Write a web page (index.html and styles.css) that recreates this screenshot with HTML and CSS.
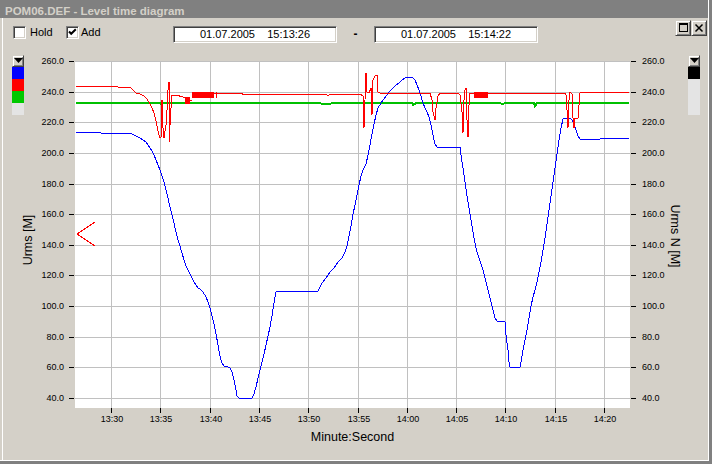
FILE: index.html
```html
<!DOCTYPE html>
<html>
<head>
<meta charset="utf-8">
<title>POM06.DEF - Level time diagram</title>
<link rel="stylesheet" href="styles.css">
</head>
<body>
<div class="window">
  <div class="frame">
    <div class="titlebar">POM06.DEF - Level time diagram</div>
    <div class="content">
      <div class="toolbar">
        <div class="check hold"><span class="box"></span><span class="lbl">Hold</span></div>
        <div class="check add"><span class="box"><svg width="11" height="11" viewBox="0 0 11 11"><polyline points="2,4.5 4.2,6.8 8.8,2.2" fill="none" stroke="#000" stroke-width="2"/></svg></span><span class="lbl">Add</span></div>
        <div class="datebox">01.07.2005    15:13:26</div>
        <div class="dash">-</div>
        <div class="datebox">01.07.2005    15:14:22</div>
        <div class="winbtns">
          <span class="wbtn"><svg width="14" height="14" viewBox="1 1 14 14"><rect x="4.5" y="3.5" width="8" height="8" fill="none" stroke="#000"/><line x1="4" y1="4.5" x2="13" y2="4.5" stroke="#000"/></svg></span>
          <span class="wbtn"><svg width="14" height="14" viewBox="1 1 14 14"><path d="M4.5 4.5 L11.5 11.5 M11.5 4.5 L4.5 11.5" stroke="#000" stroke-width="1.5"/></svg></span>
        </div>
      </div>
      <div class="main">
        <svg class="chart" width="705" height="412" viewBox="3 48 705 412">
          <rect x="75" y="61" width="555" height="347" fill="#fff"/>
          <g class="grid" stroke="#c0c0c0" stroke-width="1" shape-rendering="crispEdges">
            <line x1="75" y1="61.5" x2="630" y2="61.5"/>
            <line x1="75" y1="92.5" x2="630" y2="92.5"/>
            <line x1="75" y1="122.5" x2="630" y2="122.5"/>
            <line x1="75" y1="153.5" x2="630" y2="153.5"/>
            <line x1="75" y1="184.5" x2="630" y2="184.5"/>
            <line x1="75" y1="214.5" x2="630" y2="214.5"/>
            <line x1="75" y1="245.5" x2="630" y2="245.5"/>
            <line x1="75" y1="275.5" x2="630" y2="275.5"/>
            <line x1="75" y1="306.5" x2="630" y2="306.5"/>
            <line x1="75" y1="337.5" x2="630" y2="337.5"/>
            <line x1="75" y1="367.5" x2="630" y2="367.5"/>
            <line x1="75" y1="398.5" x2="630" y2="398.5"/>
            <line x1="111.5" y1="61" x2="111.5" y2="408"/>
            <line x1="160.5" y1="61" x2="160.5" y2="408"/>
            <line x1="210.5" y1="61" x2="210.5" y2="408"/>
            <line x1="259.5" y1="61" x2="259.5" y2="408"/>
            <line x1="308.5" y1="61" x2="308.5" y2="408"/>
            <line x1="358.5" y1="61" x2="358.5" y2="408"/>
            <line x1="407.5" y1="61" x2="407.5" y2="408"/>
            <line x1="456.5" y1="61" x2="456.5" y2="408"/>
            <line x1="505.5" y1="61" x2="505.5" y2="408"/>
            <line x1="555.5" y1="61" x2="555.5" y2="408"/>
            <line x1="604.5" y1="61" x2="604.5" y2="408"/>
          </g>
          <g class="ticks" stroke="#000" stroke-width="1" shape-rendering="crispEdges">
            <path d="M69 61.5H74M69 92.5H74M69 122.5H74M69 153.5H74M69 184.5H74M69 214.5H74M69 245.5H74M69 275.5H74M69 306.5H74M69 337.5H74M69 367.5H74M69 398.5H74"/>
            <path d="M631 61.5H636M631 92.5H636M631 122.5H636M631 153.5H636M631 184.5H636M631 214.5H636M631 245.5H636M631 275.5H636M631 306.5H636M631 337.5H636M631 367.5H636M631 398.5H636"/>
            <path d="M111.5 408V413M160.5 408V413M210.5 408V413M259.5 408V413M308.5 408V413M358.5 408V413M407.5 408V413M456.5 408V413M505.5 408V413M555.5 408V413M604.5 408V413"/>
          </g>
          <g class="ylabels" text-anchor="end">
            <text x="64" y="64">260.0</text>
            <text x="64" y="95">240.0</text>
            <text x="64" y="125">220.0</text>
            <text x="64" y="156">200.0</text>
            <text x="64" y="187">180.0</text>
            <text x="64" y="217">160.0</text>
            <text x="64" y="248">140.0</text>
            <text x="64" y="278">120.0</text>
            <text x="64" y="309">100.0</text>
            <text x="64" y="340">80.0</text>
            <text x="64" y="370">60.0</text>
            <text x="64" y="401">40.0</text>
          </g>
          <g class="ylabels" text-anchor="start">
            <text x="642" y="64">260.0</text>
            <text x="642" y="95">240.0</text>
            <text x="642" y="125">220.0</text>
            <text x="642" y="156">200.0</text>
            <text x="642" y="187">180.0</text>
            <text x="642" y="217">160.0</text>
            <text x="642" y="248">140.0</text>
            <text x="642" y="278">120.0</text>
            <text x="642" y="309">100.0</text>
            <text x="642" y="340">80.0</text>
            <text x="642" y="370">60.0</text>
            <text x="642" y="401">40.0</text>
          </g>
          <g class="xlabels" text-anchor="middle">
            <text x="112" y="422">13:30</text>
            <text x="161" y="422">13:35</text>
            <text x="211" y="422">13:40</text>
            <text x="260" y="422">13:45</text>
            <text x="309" y="422">13:50</text>
            <text x="359" y="422">13:55</text>
            <text x="408" y="422">14:00</text>
            <text x="457" y="422">14:05</text>
            <text x="506" y="422">14:10</text>
            <text x="556" y="422">14:15</text>
            <text x="605" y="422">14:20</text>
          </g>
          <text class="axis-title" transform="translate(31.5 240) rotate(-90)" text-anchor="middle">Urms [M]</text>
          <text class="axis-title" transform="translate(671 236) rotate(90)" text-anchor="middle">Urms N [M]</text>
          <text class="axis-title" x="352.5" y="441" text-anchor="middle">Minute:Second</text>

          <g class="data" fill="none" stroke-width="1" shape-rendering="crispEdges">
            <polyline stroke="#00c000" stroke-width="2" points="76,103 160,103 161,104 164,103 320,103 322,104 330,104 332,103 412,103 413,105 416,103 500,103 502,104 506,103 534,103 535,106 537,103 629,103"/>
            <polyline stroke="#0000ff" points="76,132 100,132 101,133 128,133 132,134 136,136 140,138 143,140 146,142 148,145 150,148 152,151 154,155 156,160 158,165 160,170 162,176 164,182 166,190 168,198 170,207 172,215 174,223 176,232 178,240 180,246 182,253 184,260 186,266 188,270 190,274 192,278 194,282 196,285 198,288 200,289 203,292 206,297 208,302 210,308 212,316 214,324 216,334 218,345 220,356 222,363 224,366 228,367 230,368 232,372 234,380 236,390 237,396 239,398 252,398 254,394 256,387 258,378 260,370 262,362 264,354 266,345 268,336 270,327 272,316 274,303 276,292 278,291 318,291 320,287 322,283 326,278 330,272 334,268 338,262 342,258 345,252 347,246 349,236 351,226 353,214 355,205 357,195 359,185 361,176 363,170 366,164 368,155 370,145 372,134 374,124 376,115 378,108 381,103 384,99 387,95 390,91 393,88 396,85 399,83 402,80 405,78 408,77 412,77 415,80 417,85 419,90 421,96 423,103 425,108 427,112 429,117 431,125 433,135 435,144 437,147 460,147 461,155 463,168 465,182 467,196 469,208 471,220 473,232 475,243 477,252 479,258 481,264 483,270 485,278 487,286 489,294 491,302 493,310 495,318 497,321 505,322 506,335 508,350 509,362 510,367 520,367 521,362 523,350 525,340 527,330 529,318 531,306 533,297 535,290 537,282 539,272 541,262 543,250 545,238 547,224 549,210 551,196 553,182 555,168 557,154 559,140 561,128 563,119 566,118 570,118 572,120 574,124 576,130 578,136 580,139 600,139 629,138"/>
            <polyline stroke="#ff0000" points="76,86 117,86 118,87 130,87 133,90 136,93 140,94 144,96 147,99 150,104 152,108 154,113 156,121 158,131 160,138 161,137 162,100 163,128 164,138 166,125 167,110 168,90 169,82 169,142 171,108 172,95 176,95 183,97 185,97"/>
            <rect x="185" y="97" width="5" height="7" fill="#ff0000"/>
            <rect x="192" y="92" width="21" height="6" fill="#ff0000"/>
            <path stroke="#ff0000" d="M213.5 92V98M216.5 92V98M190 100H192"/>
            <polyline stroke="#ff0000" points="213,93 242,93 242,94 320,94 326,94 328,96 330,94 355,94 360,94 363,96 364,128 365,100 366,73 367,92 369,93 371,88 372,115 373,80 375,76 377,75 378,92 380,93 430,93 432,100 433,112 435,120 436,108 438,96 440,93 458,93 460,95 462,112 463,133 464,100 465,90 466,88 467,120 468,137 469,105 470,93 474,93"/>
            <rect x="474" y="92" width="14" height="6" fill="#ff0000"/>
            <polyline stroke="#ff0000" points="488,93 565,93 566,95 567,110 568,128 569,100 570,92 572,94 573,118 574,128 575,118 578,118 579,105 580,93 584,92 629,92"/>
            <polyline stroke="#ff0000" points="95,222 77,234 95,246"/>
          </g>
        </svg>
        <div class="legend legend-left">
          <span class="lbtn"><svg width="10" height="10" viewBox="1 1 10 10"><polygon points="2,3 11,3 6.5,8" fill="#000"/></svg></span>
          <span class="sw blue"></span>
          <span class="sw red"></span>
          <span class="sw green"></span>
          <span class="sw empty"></span>
        </div>
        <div class="legend legend-right">
          <span class="lbtn"><svg width="10" height="10" viewBox="1 1 10 10"><polygon points="2,3 11,3 6.5,8" fill="#000"/></svg></span>
          <span class="sw black"></span>
          <span class="sw empty tall"></span>
        </div>
      </div>
    </div>
  </div>
</div>
</body>
</html>
```

FILE: styles.css
```css
html, body {
  margin: 0;
  padding: 0;
}

body {
  background: #d4d0c8;
  font-family: "Liberation Sans", Arial, sans-serif;
  color: #000;
}

.window {
  width: 712px;
  height: 464px;
  box-sizing: border-box;
  border-right: 3px solid #808080;
  border-bottom: 3px solid #808080;
}

.frame {
  height: 100%;
  box-sizing: border-box;
  border-right: 1px solid #fff;
  border-bottom: 1px solid #fff;
  display: flex;
  flex-direction: column;
}

.titlebar {
  height: 18px;
  flex: none;
  box-sizing: border-box;
  padding: 2px 0 0 5px;
  background: #808080;
  color: #d4d0c8;
  font: bold 11.5px/19px "Liberation Sans", Arial, sans-serif;
  white-space: nowrap;
  overflow: hidden;
}

.content {
  flex: 1;
  display: flex;
  flex-direction: column;
  margin-left: 2px;
  border-left: 1px solid #fff;
}

.toolbar {
  height: 30px;
  flex: none;
  box-sizing: border-box;
  padding: 8px 0 0 10px;
  display: flex;
  align-items: flex-start;
}

.check {
  display: flex;
  align-items: center;
  height: 13px;
  font-size: 11px;
  line-height: 13px;
}

.check.hold { width: 53px; }
.check.add { width: 107px; }

.box {
  width: 13px;
  height: 13px;
  box-sizing: border-box;
  border: 1px solid;
  border-color: #808080 #fff #fff #808080;
  box-shadow: inset 1px 1px #404040, inset -1px -1px #d4d0c8;
  background: #fff;
  display: block;
}

.box svg {
  display: block;
}

.hold .box { margin-right: 4px; }
.add .box { margin-right: 2px; }

.datebox {
  width: 164px;
  height: 17px;
  box-sizing: border-box;
  border: 1px solid;
  border-color: #808080 #fff #fff #808080;
  box-shadow: inset 1px 1px #404040, inset -1px -1px #d4d0c8;
  background: #fff;
  font-size: 11px;
  line-height: 15px;
  text-align: center;
  white-space: pre;
}

.dash {
  width: 37px;
  height: 17px;
  text-align: center;
  font: bold 12px/17px "Liberation Sans", Arial, sans-serif;
}

.winbtns {
  margin: -6px 1px 0 auto;
  display: flex;
}

.wbtn,
.lbtn {
  display: block;
  box-sizing: border-box;
  border: 1px solid;
  border-color: #d4d0c8 #404040 #404040 #d4d0c8;
  box-shadow: inset 1px 1px #fff, inset -1px -1px #808080;
  background: #d4d0c8;
}

.wbtn {
  width: 16px;
  height: 16px;
}

.wbtn svg,
.lbtn svg {
  display: block;
}

.main {
  flex: 1;
  display: grid;
  grid-template-columns: 37px 1fr 36px;
  grid-template-rows: 412px;
}

.chart {
  display: block;
  grid-column: 1 / 4;
  grid-row: 1;
}

.legend {
  grid-row: 1;
  box-sizing: border-box;
  display: flex;
  flex-direction: column;
  align-self: start;
  padding-top: 7px;
}

.legend-left {
  grid-column: 1;
  padding-left: 9px;
}

.legend-right {
  grid-column: 3;
  padding-left: 16px;
}

.lbtn {
  width: 12px;
  height: 12px;
}

.sw {
  display: block;
  width: 12px;
  height: 12px;
}

.sw.blue { background: #0000ff; }
.sw.red { background: #ff0000; }
.sw.green { background: #00c800; }
.sw.black { background: #000; }
.sw.empty { background: #e4e4e4; }
.sw.tall { height: 36px; }

.ylabels text,
.xlabels text {
  font-family: "Liberation Sans", Arial, sans-serif;
  font-size: 9px;
  fill: #000;
}

.axis-title {
  font-family: "Liberation Sans", Arial, sans-serif;
  font-size: 12.5px;
  fill: #000;
}
```
